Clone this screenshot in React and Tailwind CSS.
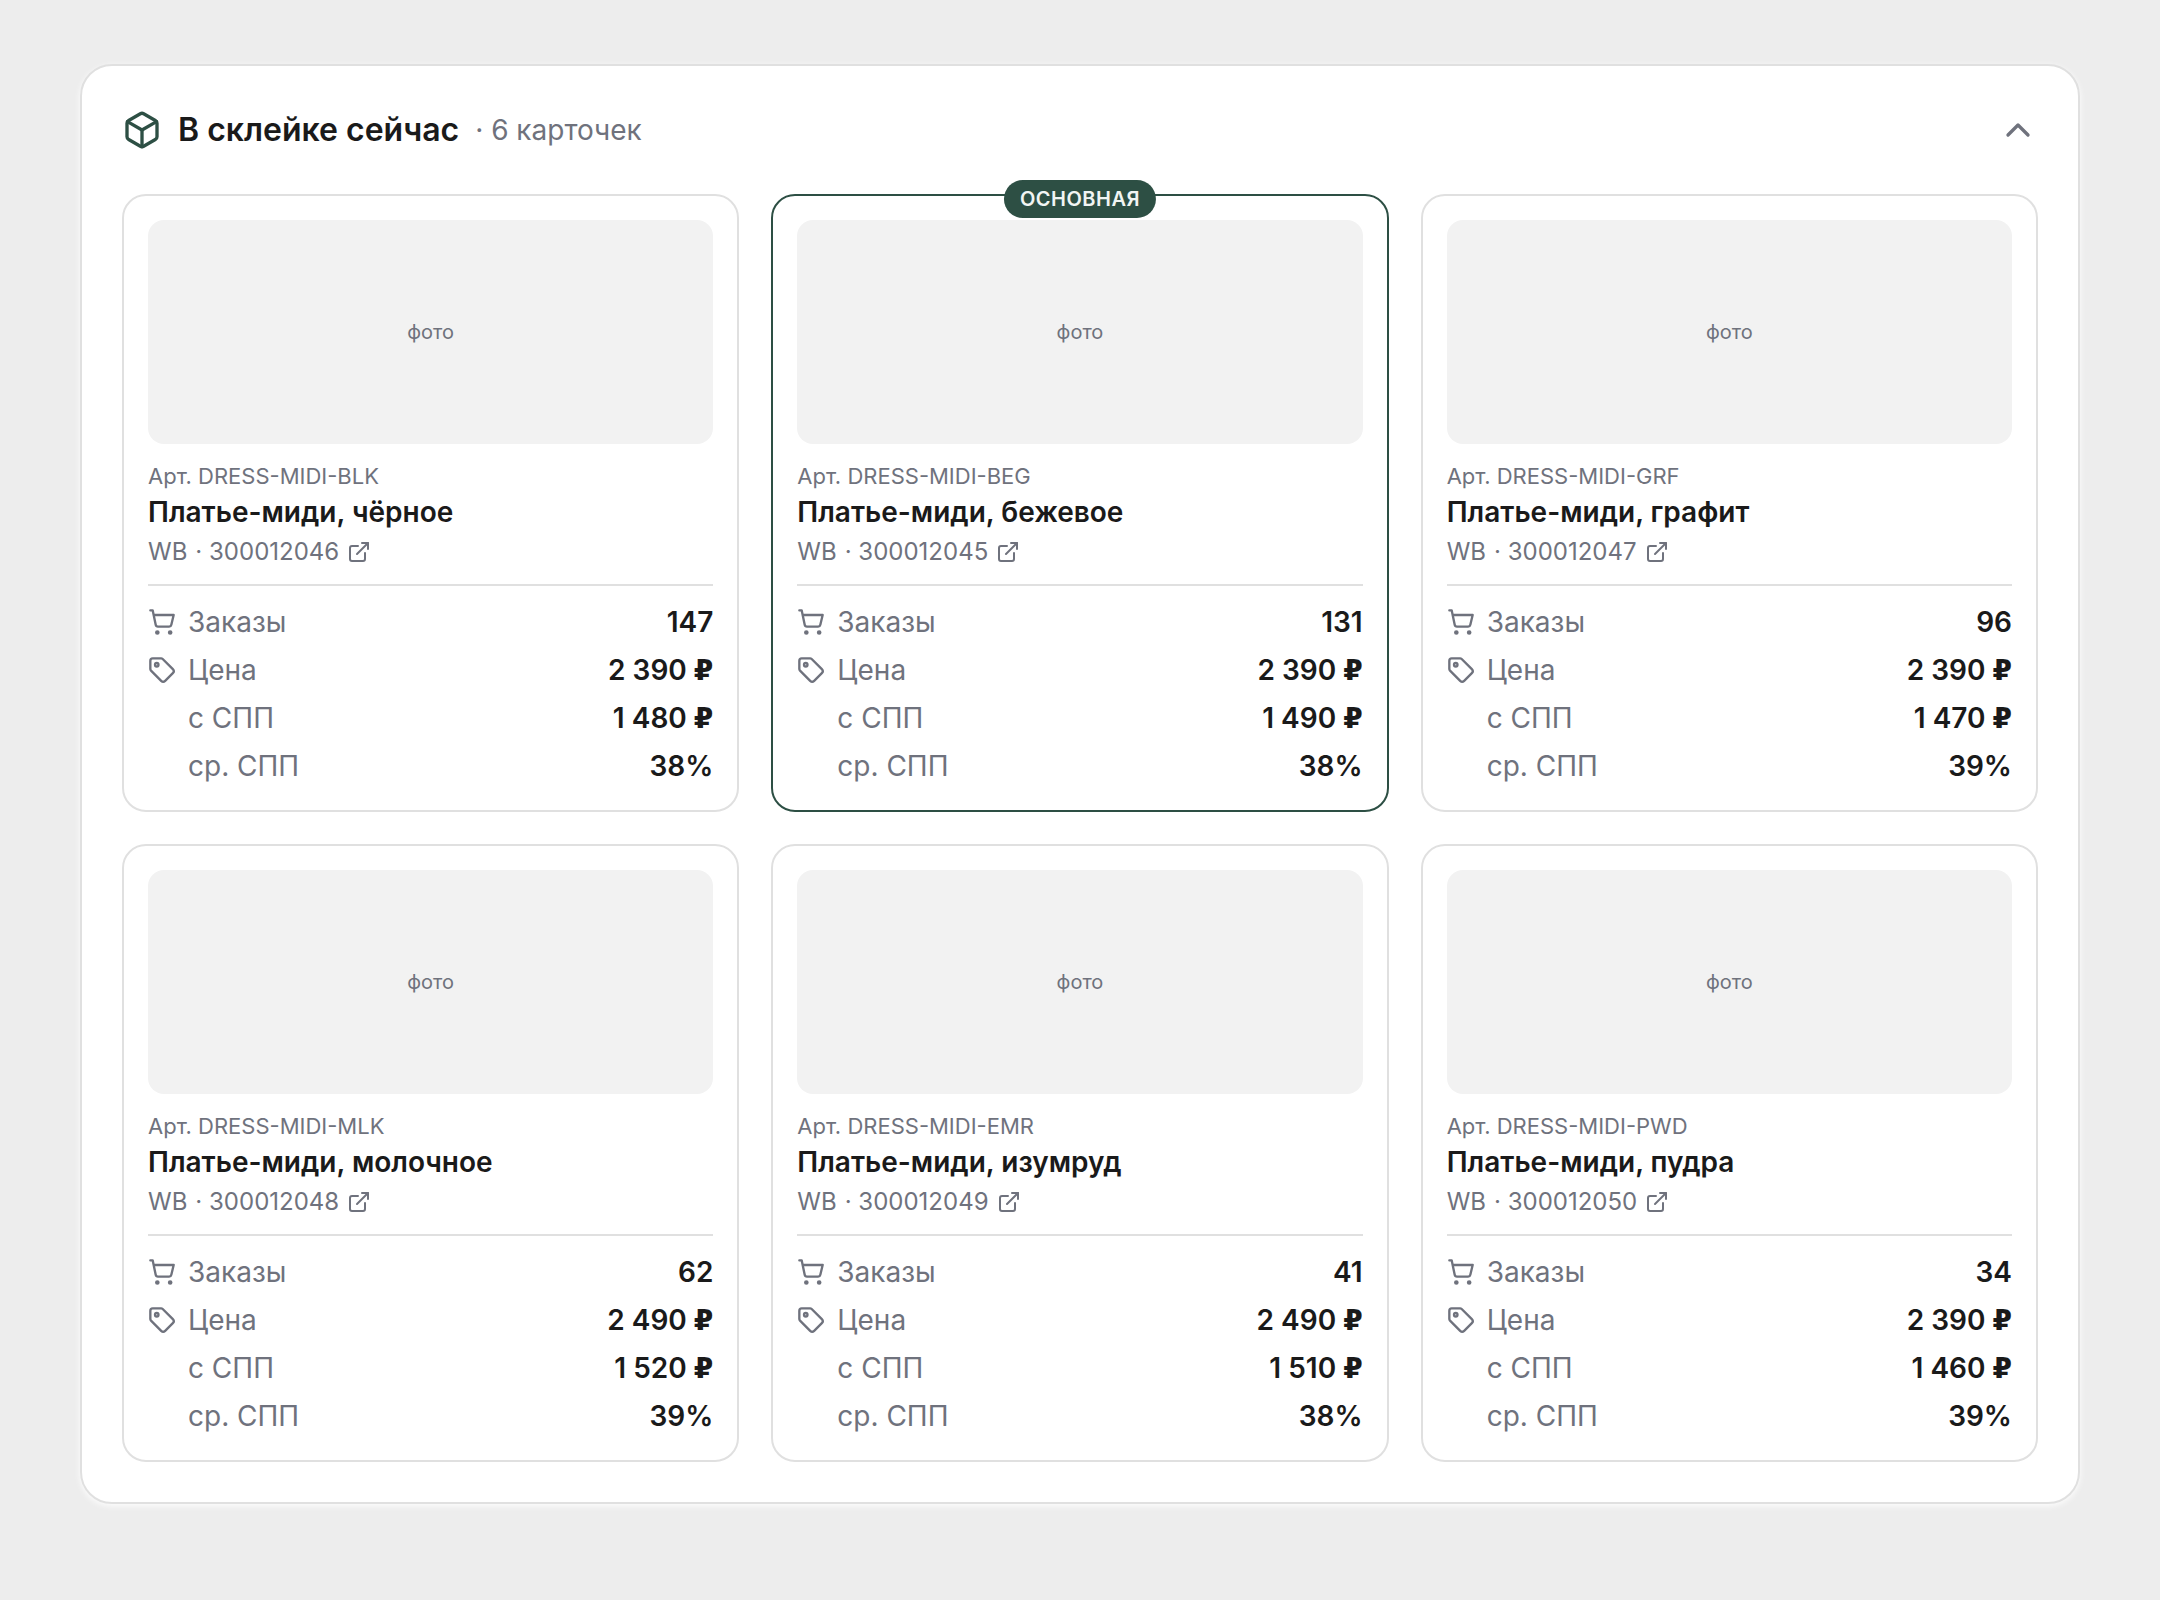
import { Box, ChevronUp, ExternalLink } from "lucide-react";

const cards = [
  { art: "DRESS-MIDI-BLK", name: "Платье-миди, чёрное", id: "300012046", orders: "147", price: "2 390 ₽", spp: "1 480 ₽", avg: "38%" },
  { art: "DRESS-MIDI-BEG", name: "Платье-миди, бежевое", id: "300012045", orders: "131", price: "2 390 ₽", spp: "1 490 ₽", avg: "38%", main: true },
  { art: "DRESS-MIDI-GRF", name: "Платье-миди, графит", id: "300012047", orders: "96", price: "2 390 ₽", spp: "1 470 ₽", avg: "39%" },
  { art: "DRESS-MIDI-MLK", name: "Платье-миди, молочное", id: "300012048", orders: "62", price: "2 490 ₽", spp: "1 520 ₽", avg: "39%" },
  { art: "DRESS-MIDI-EMR", name: "Платье-миди, изумруд", id: "300012049", orders: "41", price: "2 490 ₽", spp: "1 510 ₽", avg: "38%" },
  { art: "DRESS-MIDI-PWD", name: "Платье-миди, пудра", id: "300012050", orders: "34", price: "2 390 ₽", spp: "1 460 ₽", avg: "39%" },
];

function CartIcon() {
  return (
    <svg className="size-7" viewBox="0 0 24 24" fill="none" stroke="currentColor" strokeWidth="2" strokeLinecap="round" strokeLinejoin="round" aria-hidden="true">
      <path d="M2 2h2l2.6 12.4a2 2 0 0 0 2 1.6h9.5a2 2 0 0 0 1.9-1.6L22 6H5" />
      <circle cx="8" cy="21" r="1" />
      <circle cx="19" cy="21" r="1" />
    </svg>
  );
}

function TagIcon() {
  return (
    <svg className="size-7" viewBox="0 0 24 24" fill="none" stroke="currentColor" strokeWidth="2" strokeLinecap="round" strokeLinejoin="round" aria-hidden="true">
      <path d="M12.586 2.586A2 2 0 0 0 11.172 2H4a2 2 0 0 0-2 2v7.172a2 2 0 0 0 .586 1.414l8.704 8.704a2.426 2.426 0 0 0 3.42 0l6.58-6.58a2.426 2.426 0 0 0 0-3.42z" />
      <circle cx="7.5" cy="7.5" r="1.5" />
    </svg>
  );
}

// The currency sign is set in a heavier face than the digits.
function Value({ text }) {
  if (!text.endsWith("₽")) return text;
  return (
    <>
      {text.slice(0, -1)}
      <span className="font-['DejaVu_Sans',sans-serif] font-bold">₽</span>
    </>
  );
}

function Stat({ icon, label, value }) {
  return (
    <div className="flex h-10 items-center gap-3 text-[28px] leading-10">
      <dt className="flex flex-1 items-center gap-3 text-[#6f727d]">
        <span className="size-7 shrink-0">{icon}</span>
        {label}
      </dt>
      <dd className="font-semibold whitespace-nowrap text-[#1a1a1a]">
        <Value text={value} />
      </dd>
    </div>
  );
}

function Card({ card }) {
  return (
    <article
      className={
        card.main
          ? "relative rounded-3xl border-2 border-[#2d4f44] bg-white p-6"
          : "relative rounded-3xl border-2 border-[#e0e0e0] bg-white p-6"
      }
    >
      {card.main && (
        <span className="absolute -top-4 left-1/2 -translate-x-1/2 rounded-full bg-[#2d4f44] px-4 text-xl leading-[38px] font-semibold tracking-wide text-[#f1f5f3]">
          ОСНОВНАЯ
        </span>
      )}
      <div className="flex h-56 items-center justify-center rounded-2xl bg-[#f2f2f2] text-xl text-[#6f727d]">фото</div>
      <p className="mt-4 text-[22px] leading-8 text-[#6f727d]">Арт. {card.art}</p>
      <h3 className="text-[28px] leading-10 font-semibold text-[#1a1a1a]">{card.name}</h3>
      <div className="border-b-2 border-[#e0e0e0] pb-3">
        <a href={"#" + card.id} className="flex w-fit items-center gap-2 text-2xl leading-10 text-[#6f727d]">
          <span>WB</span>
          <span>· {card.id}</span>
          <ExternalLink className="size-6" strokeWidth={2} />
        </a>
      </div>
      <dl className="mt-4 flex flex-col gap-2">
        <Stat icon={<CartIcon />} label="Заказы" value={card.orders} />
        <Stat icon={<TagIcon />} label="Цена" value={card.price} />
        <Stat label="с СПП" value={card.spp} />
        <Stat label="ср. СПП" value={card.avg} />
      </dl>
    </article>
  );
}

export default function App() {
  return (
    <main className="min-h-screen bg-[#ededed] px-20 py-16 font-['Inter',sans-serif]">
      <section className="rounded-[32px] border-2 border-[#e0e0e0] bg-white p-10 shadow-[0_2px_6px_rgba(255,255,255,0.9)]">
        <header className="mb-10 flex h-12 items-center gap-4">
          <Box className="size-10 text-[#2d4f44]" />
          <h2 className="text-[32px] leading-10 font-semibold text-[#1a1a1a]">В склейке сейчас</h2>
          <span className="text-[28px] leading-10 text-[#6f727d]">· 6 карточек</span>
          <button type="button" aria-label="Свернуть" aria-expanded="true" className="ml-auto text-[#6f727d]">
            <ChevronUp className="size-10" />
          </button>
        </header>
        <div className="grid grid-cols-3 gap-8">
          {cards.map((card) => (
            <Card key={card.id} card={card} />
          ))}
        </div>
      </section>
    </main>
  );
}
